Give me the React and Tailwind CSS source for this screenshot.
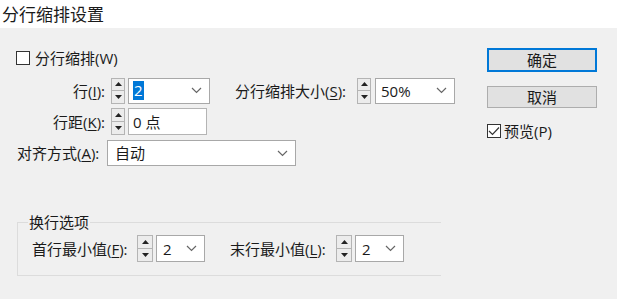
import React from "react";

function Spinner({ h = "h-[26px]", w = "w-[14px]" }) {
  return (
    <div className={`flex flex-col ${w} ${h} border border-[#b4b4b4] bg-[#ececec] shrink-0`}>
      <div className="flex-1 flex items-center justify-center border-b border-[#b4b4b4]">
        <svg width="7" height="4" viewBox="0 0 7 4"><path d="M0 4 L3.5 0 L7 4 Z" fill="#222" /></svg>
      </div>
      <div className="flex-1 flex items-center justify-center">
        <svg width="7" height="4" viewBox="0 0 7 4"><path d="M0 0 L3.5 4 L7 0 Z" fill="#222" /></svg>
      </div>
    </div>
  );
}

function Chevron() {
  return (
    <svg width="11" height="7" viewBox="0 0 11 7" className="shrink-0">
      <path d="M1 1 L5.5 5.5 L10 1" fill="none" stroke="#666" strokeWidth="1.2" />
    </svg>
  );
}

function Combo({ w, h = "h-[26px]", children }) {
  return (
    <div className={`flex items-center justify-between ${w} ${h} border border-[#a8a8a8] bg-white pl-[4px] pr-[7px] shrink-0`}>
      <div className="flex items-center">{children}</div>
      <Chevron />
    </div>
  );
}

function Box({ checked }) {
  return (
    <div className="w-[14px] h-[14px] border border-[#333] bg-white flex items-center justify-center shrink-0">
      {checked && (
        <svg width="12" height="10" viewBox="0 0 12 10">
          <path d="M1 5 L4.5 8.5 L11 1.5" fill="none" stroke="#333" strokeWidth="1.2" />
        </svg>
      )}
    </div>
  );
}

const U = ({ c }) => <span className="underline underline-offset-2">{c}</span>;

export default function App() {
  return (
    <div
      className="w-[617px] h-[299px] bg-[#f0f0f0] text-[#1a1a1a] overflow-hidden"
      style={{ fontFamily: '"Open Sans", "Noto Sans CJK SC", sans-serif' }}
    >
      <div
        className="h-[28px] bg-white pl-[2px] text-[17px] leading-[27px]"
        style={{ fontFamily: '"Noto Sans CJK SC", sans-serif' }}
      >
        分行缩排设置
      </div>
      <div className="flex text-[15px] leading-[18px]">
        <div className="w-[487px] shrink-0 pl-[16px] pt-[23px] flex flex-col">
          <div className="flex items-center h-[14px]">
            <Box />
            <span className="ml-[5px]">分行缩排(W)</span>
          </div>

          <div className="flex items-center mt-[12px] h-[27px]">
            <div className="w-[89px] text-right">行(<U c="I" />):</div>
            <div className="ml-[6px]"><Spinner /></div>
            <div className="ml-[3px]">
              <Combo w="w-[82px]">
                <span className="bg-[#0078d7] text-white px-[1px] leading-[19px]">2</span>
              </Combo>
            </div>
            <div className="ml-[25px] w-[122px] whitespace-nowrap">分行缩排大小(<U c="S" />):</div>
            <Spinner />
            <div className="ml-[4px]">
              <Combo w="w-[80px]"><span className="pl-[1px]">50%</span></Combo>
            </div>
          </div>

          <div className="flex items-center mt-[4px] h-[27px]">
            <div className="w-[89px] text-right">行距(<U c="K" />):</div>
            <div className="ml-[6px]"><Spinner h="h-[27px]" /></div>
            <div className="ml-[3px] w-[79px] h-[27px] border border-[#b4b4b4] bg-white flex items-center pl-[4px]">0 点</div>
          </div>

          <div className="flex items-center mt-[5px] h-[26px]">
            <div className="ml-[1px] w-[90px] whitespace-nowrap">对齐方式(<U c="A" />):</div>
            <Combo w="w-[189px]"><span className="pl-[3px]">自动</span></Combo>
          </div>

          <div className="relative mt-[56px] ml-[1px] w-[424px] h-[54px] border-t border-l border-b border-[#dcdcdc] pl-[14px] pt-[12px]">
            <div className="absolute left-[10px] top-[-10px] px-[1px] bg-[#f0f0f0]">换行选项</div>
            <div className="flex items-center h-[27px]">
              <div className="w-[105px] whitespace-nowrap">首行最小值(<U c="F" />):</div>
              <Spinner w="w-[16px]" h="h-[27px]" />
              <div className="ml-[3px]">
                <Combo w="w-[49px]" h="h-[27px]"><span className="pl-[2px]">2</span></Combo>
              </div>
              <div className="ml-[25px] w-[106px] whitespace-nowrap">末行最小值(<U c="L" />):</div>
              <Spinner w="w-[16px]" h="h-[27px]" />
              <div className="ml-[3px]">
                <Combo w="w-[49px]" h="h-[27px]"><span className="pl-[2px]">2</span></Combo>
              </div>
            </div>
          </div>
        </div>

        <div className="w-[110px] pt-[20px] flex flex-col">
          <div className="h-[24px] border-2 border-[#0078d7] bg-[#e1e1e1] flex items-center justify-center">确定</div>
          <div className="mt-[14px] h-[22px] border border-[#adadad] bg-[#e1e1e1] flex items-center justify-center">取消</div>
          <div className="mt-[16px] flex items-center h-[14px]">
            <Box checked />
            <span className="ml-[3px]">预览(P)</span>
          </div>
        </div>
      </div>
    </div>
  );
}
